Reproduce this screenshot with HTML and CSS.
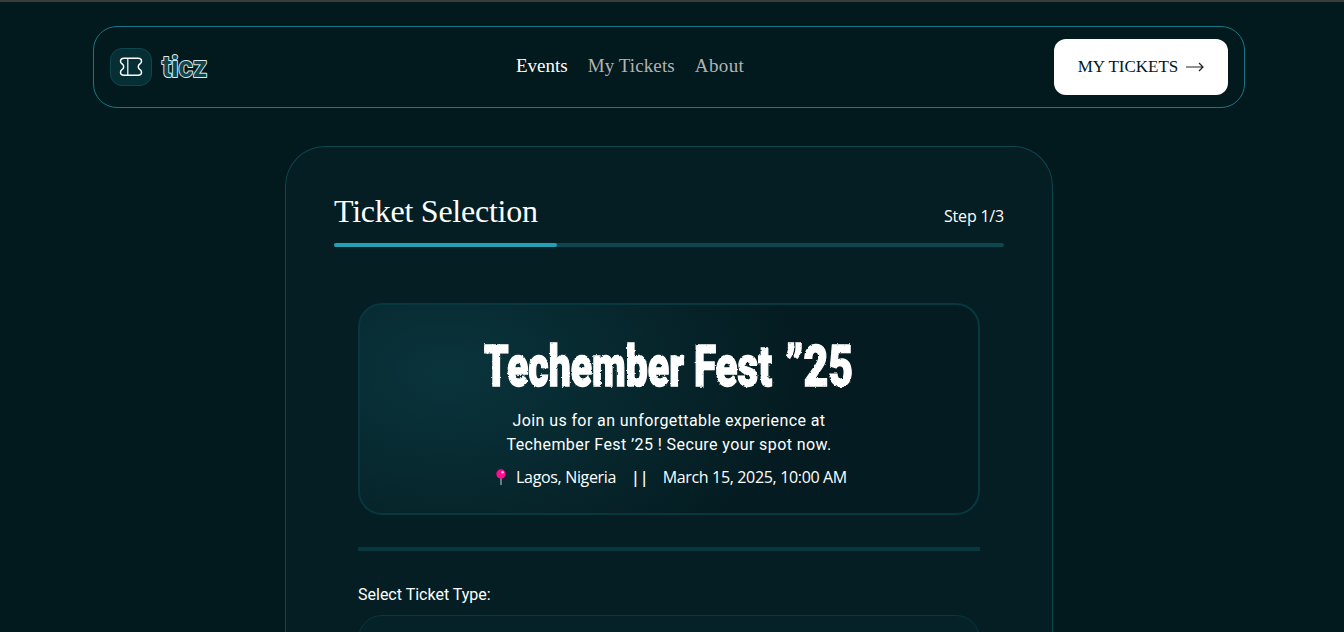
FILE: index.html
```html
<!DOCTYPE html>
<html lang="en">
<head>
<meta charset="utf-8">
<title>ticz</title>
<link rel="stylesheet" href="styles.css">
</head>
<body>
<header class="navbar">
  <a class="brand">
    <span class="brand-badge">
      <svg width="24" height="20" viewBox="0 0 24 20" fill="none" stroke="#fff" stroke-width="1.5" stroke-linejoin="round" stroke-linecap="round">
        <path d="M5 1.300H19C21.500 1.300 22.500 2.500 22.500 4.300C22.500 6 21.800 6.500 20.800 7C19.800 7.600 19.300 8.500 19.300 9.700S19.800 11.800 20.800 12.400C21.800 12.900 22.500 13.500 22.500 15.300C22.500 17 21.500 18.300 19 18.300H5C2.500 18.300 1.500 17 1.500 15.300C1.500 13.500 2.200 12.900 3.200 12.400C4.200 11.800 4.700 11 4.700 9.700S4.200 7.600 3.200 7C2.200 6.500 1.500 6 1.500 4.300C1.500 2.500 2.500 1.300 5 1.300Z"/>
        <path d="M8.800 2V18" stroke-width="1.200"/>
      </svg>
    </span>
    <svg class="wordmark" width="56" height="36"><text x="4" y="28" textLength="45" lengthAdjust="spacingAndGlyphs">ticz</text></svg>
  </a>
  <nav class="links">
    <a class="link link-active">Events</a>
    <a class="link link-mid">My Tickets</a>
    <a class="link link-last">About</a>
  </nav>
  <a class="tickets-button"><span class="tickets-label">MY TICKETS</span>
    <svg width="18" height="10" viewBox="0 0 18 10" fill="none" stroke="#222" stroke-width="1.200"><path d="M0 5h17M13 1l4 4-4 4"/></svg>
  </a>
</header>
<main class="panel">
  <div class="panel-head"><h1 class="title">Ticket Selection</h1><span class="step">Step 1/3</span></div>
  <div class="progress"><div class="progress-fill"></div></div>
  <div class="content">
    <section class="event">
      <svg class="event-name" width="400" height="64">
        <defs>
          <filter id="rough" x="-2%" y="-5%" width="104%" height="110%">
            <feTurbulence type="fractalNoise" baseFrequency="0.4" numOctaves="2" seed="4" result="noise"/>
            <feDisplacementMap in="SourceGraphic" in2="noise" scale="2.300" xChannelSelector="R" yChannelSelector="G"/>
          </filter>
        </defs>
        <g filter="url(#rough)">
          <text x="15" y="53.500" textLength="200" lengthAdjust="spacingAndGlyphs">Techember</text>
          <text x="225" y="53.500" textLength="78" lengthAdjust="spacingAndGlyphs">Fest</text>
          <text x="316" y="53.500" textLength="68" lengthAdjust="spacingAndGlyphs">”25</text>
        </g>
      </svg>
      <p class="event-text">Join us for an unforgettable experience at<br>Techember Fest ’25 ! Secure your spot now.</p>
      <div class="event-meta">
        <svg width="12" height="17" viewBox="0 0 12 17"><path d="M6 8v8" stroke="#a9b5bb" stroke-width="1.200"/><circle cx="6" cy="5" r="4.700" fill="#ff0a91"/><circle cx="7.500" cy="3.300" r="1.300" fill="#ffc0e4"/></svg>
        <span class="place">Lagos, Nigeria</span><span class="bars">||</span><span class="date">March 15, 2025, 10:00 AM</span>
      </div>
    </section>
    <div class="divider"></div>
    <div class="field-label">Select Ticket Type:</div>
    <div class="types"></div>
  </div>
</main>
</body>
</html>
```
FILE: styles.css
```css
* { box-sizing: border-box; }
body {
  margin: 0;
  height: 632px;
  border-top: 2px solid #3b3b3b;
  background: #02191d;
  color: #fff;
  font-family: Roboto, sans-serif;
  display: flow-root;
}
.navbar {
  width: 1152px;
  height: 82px;
  margin: 24px 0 0 93px;
  padding: 0 16px;
  border: 1px solid #197686;
  border-radius: 24px;
  display: grid;
  grid-template-columns: 406px 1fr 174px;
  align-items: center;
}
.brand { display: flex; align-items: center; gap: 6px; }
.brand-badge {
  width: 42px;
  height: 38px;
  border: 1px solid #0e464f;
  border-radius: 12px;
  background: #052f35;
  display: grid;
  place-items: center;
}
.wordmark text {
  font: 700 29px Roboto, sans-serif;
  fill: #0e464f;
  stroke: #dfe9ea;
  stroke-width: 2;
  stroke-linejoin: round;
  paint-order: stroke;
}
.links {
  display: flex;
  gap: 20px;
  padding-bottom: 2px;
  font-family: "Liberation Serif", serif;
  font-size: 19px;
  line-height: 24px;
}
.link { color: #b3b3b3; white-space: nowrap; }
.link-active { color: #fff; }
.link-mid { letter-spacing: 0.1px; }
.link-last { letter-spacing: 0.4px; }
.tickets-button {
  height: 56px;
  border-radius: 12px;
  background: #fff;
  color: #02191d;
  display: flex;
  align-items: center;
  justify-content: center;
  gap: 8px;
}
.tickets-label { font: 17px "Liberation Serif", serif; white-space: nowrap; }
.panel {
  width: 768px;
  height: 486px;
  margin: 38px 0 0 285px;
  padding: 43px 48px 0;
  border: 1px solid #0e464f;
  border-bottom: 0;
  border-radius: 40px 40px 0 0;
  background: #041e23;
  overflow: hidden;
}
.panel-head { height: 53px; display: flex; justify-content: space-between; }
.title { margin: 0; font: 32px/42px "Liberation Serif", serif; letter-spacing: -0.25px; }
.step { margin-top: 14px; font: 16px/24px "Open Sans", sans-serif; letter-spacing: -0.2px; }
.progress { height: 4px; border-radius: 3px; background: #0e464f; }
.progress-fill { width: 33.3%; height: 4px; border-radius: 3px; background: #24a0b5; }
.content { padding: 56px 24px 0; }
.event {
  height: 212px;
  padding-top: 27px;
  border: 2px solid #07373f;
  border-radius: 24px;
  background: radial-gradient(57% 110% at 14% 32%, #0a343c 0%, #041c21 100%);
  display: flex;
  flex-direction: column;
  align-items: center;
}
.event-name { flex: none; display: block; }
.event-name text { font: 900 58px Roboto, sans-serif; fill: #fff; stroke: #fff; stroke-width: 1.5; }
.event-text { margin: 13px 0 0; font-size: 16px; line-height: 24px; letter-spacing: 0.4px; text-align: center; white-space: nowrap; }
.event-meta { margin: 8px 0 0 4px; display: flex; align-items: center; font: 16px/24px "Open Sans", sans-serif; letter-spacing: -0.34px; white-space: nowrap; }
.place { margin-left: 9px; }
.bars { margin: 0 14px 0 15px; font-weight: 600; letter-spacing: 0; }
.divider { height: 4px; margin-top: 32px; background: #07373f; }
.field-label { margin-top: 32px; font-size: 16px; line-height: 24px; }
.types { height: 60px; margin-top: 8px; border: 1px solid #07373f; border-radius: 24px; background: #052228; }
```
